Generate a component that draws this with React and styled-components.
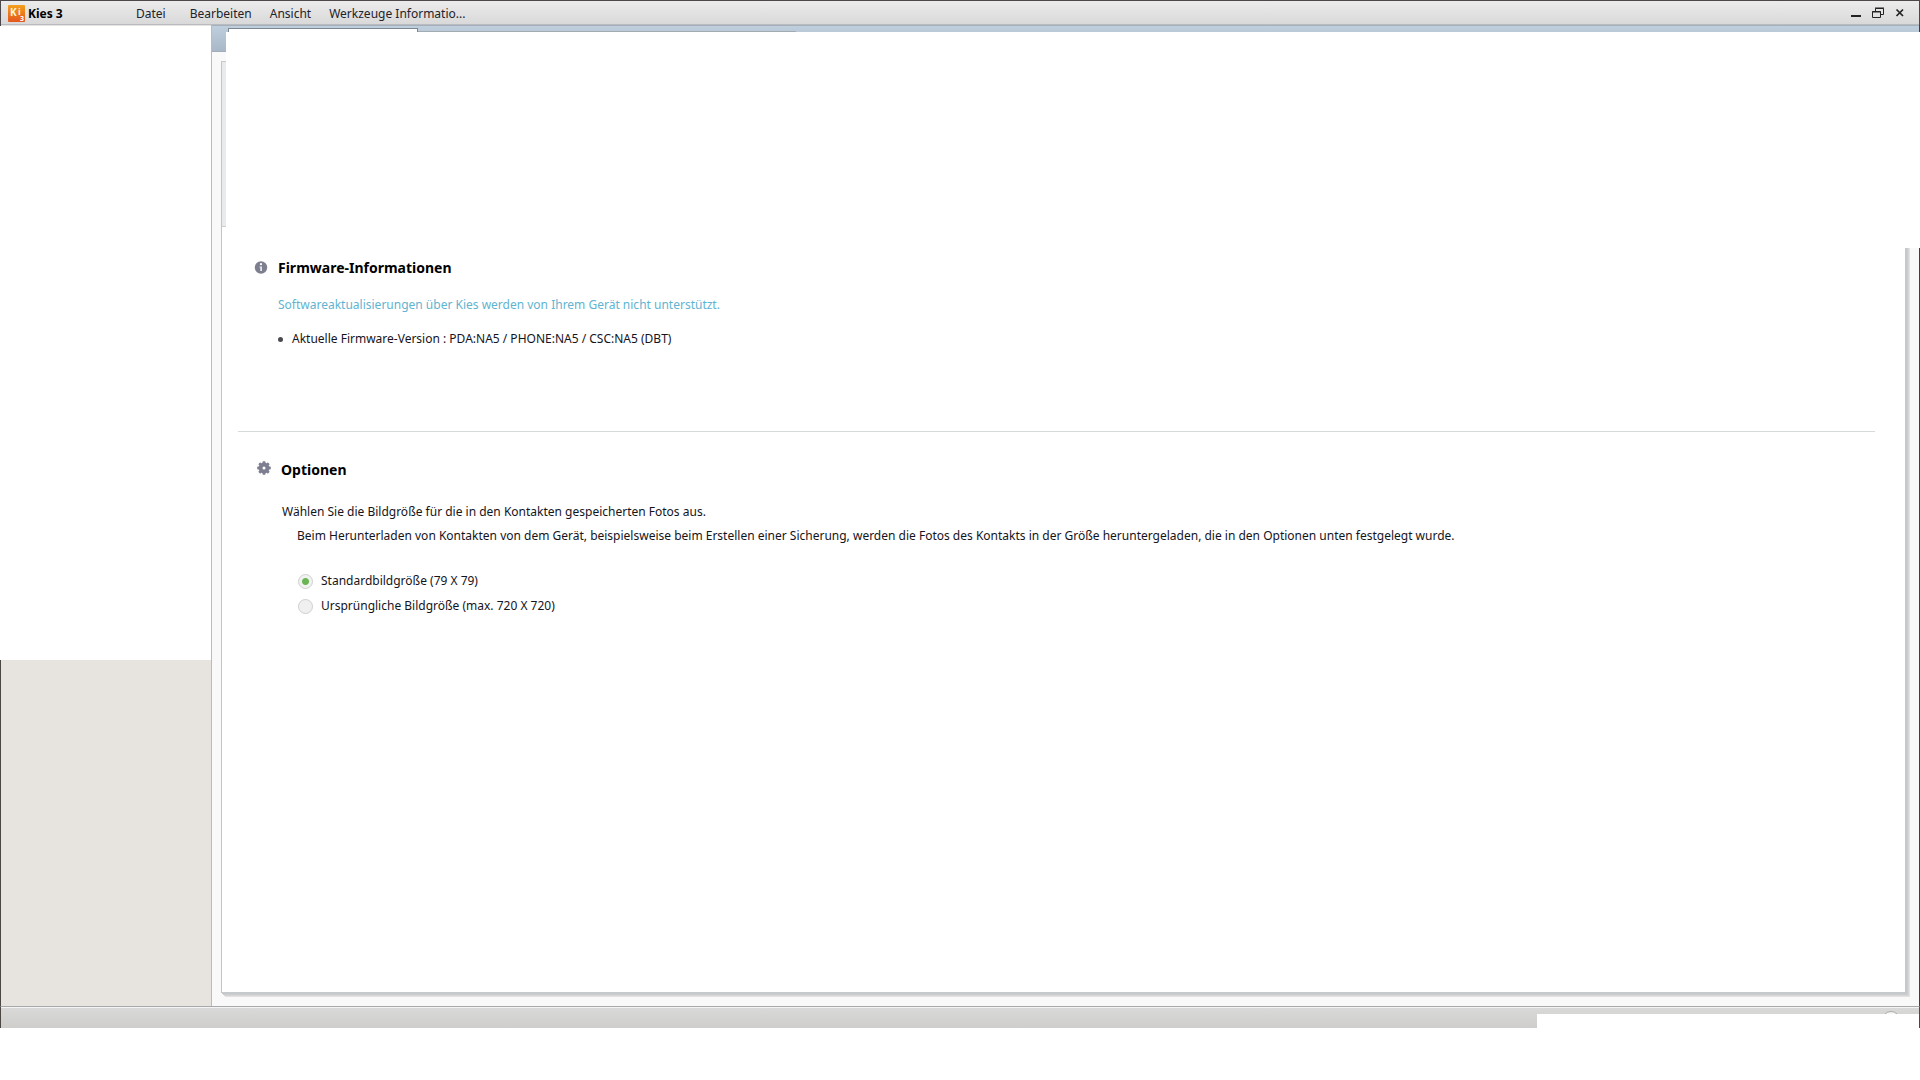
import React, { useState } from 'react';
import styled, { createGlobalStyle } from 'styled-components';

const GlobalStyle = createGlobalStyle`
  * {
    box-sizing: border-box;
  }
  body {
    margin: 0;
    background: #fff;
    color: #14141c;
    font-family: 'Noto Sans', 'Open Sans', sans-serif;
    font-size: 12px;
    line-height: 16px;
  }
`;

const Window = styled.div`
  position: relative;
  display: flex;
  flex-direction: column;
  min-height: calc(100vh - 52px);
  border-top: 1px solid #4b474b;
`;

const TitleBar = styled.header`
  display: flex;
  align-items: center;
  height: 24px;
  padding: 1px 10px 0 7px;
  background: linear-gradient(#ececec, #d8d8d8);
  border: solid #4b474b;
  border-width: 0 1px;
  box-shadow: inset 0 -1px #b8bcc0;
`;

const Brand = styled.div`
  display: flex;
  align-items: center;
  gap: 3px;
  width: 128px;
  font-weight: 700;
  color: #000;
`;

const Menu = styled.nav`
  display: flex;
  flex: 1;
  gap: 18px;
`;

const MenuItem = styled.button`
  padding: 0;
  border: none;
  background: none;
  font: inherit;
  color: #22222a;
  cursor: pointer;

  &:first-child {
    margin-right: 6px;
  }
`;

const WindowButtons = styled.div`
  display: flex;
  gap: 3px;
`;

const WindowButton = styled.button`
  display: flex;
  align-items: center;
  justify-content: center;
  width: 19px;
  height: 22px;
  padding: 0 0 2px;
  border: none;
  background: none;
  cursor: pointer;
`;

const Body = styled.div`
  display: flex;
  flex: 1;
`;

const Sidebar = styled.aside`
  position: relative;
  width: 212px;
  background: #e7e4df;
  border-left: 1px solid #4b4743;
  border-right: 1px solid #b9bcbe;
`;

const SidebarBlank = styled.div`
  position: absolute;
  top: 1px;
  left: -1px;
  right: 0;
  height: 634px;
  background: #fff;
`;

const Main = styled.main`
  position: relative;
  display: flex;
  flex-direction: column;
  flex: 1;
  background: #f9f9fa;
  border-right: 1px solid #3f3f42;
`;

const TabStrip = styled.div`
  display: flex;
  height: 27px;
  padding: 2px 0 0 16px;
  background: linear-gradient(#c0cfdd, #a9b8c8);
  border-top: 1px solid #a5b0bb;
  border-bottom: 1px solid #a3adb8;
`;

const ActiveTab = styled.div`
  width: 190px;
  background: #fff;
  border: 1px solid #7b8793;
  border-bottom: none;
`;

const TabLine = styled.div`
  width: 378px;
  height: 4px;
  border-bottom: 1px solid #a2aab2;
`;

const MainBlank = styled.div`
  position: absolute;
  top: 7px;
  left: 14px;
  right: -1px;
  height: 216px;
  background: #fff;
`;

const Panel = styled.div`
  flex: 1;
  margin: 9px 13px 13px 9px;
  background: #fff;
  border-left: 1px solid #c2c5c8;
  border-top: 1px solid #c8cbcd;
  border-right: 1px solid #c6c9cb;
  border-bottom: 1px solid #c6c9cb;
  box-shadow: 1px 1px #c6c9cc, 2px 2px #cbcdcf, 3px 3px #d6d6d6, 4px 4px #e4e1de;
`;

const PanelHead = styled.div`
  height: 165px;
  background: #e9eaeb;
  border-bottom: 1px solid #cdcfd1;
`;

const Section = styled.section`
  padding: 31px 0 0 32px;
`;

const FirmwareSection = styled(Section)`
  height: 204px;
`;

const OptionsSection = styled(Section)`
  padding: 28px 0 32px 35px;
`;

const Heading = styled.h2`
  display: flex;
  align-items: center;
  gap: 10px;
  margin: 0;
  font-size: 14px;
  line-height: 20px;
  font-weight: 700;
  color: #000;
`;

const FirmwareDetails = styled.div`
  padding-left: 24px;
`;

const OptionsDetails = styled.div`
  padding-left: 25px;
`;

const Notice = styled.p`
  margin: 19px 0 18px;
  color: #5fb4d0;
`;

const FactList = styled.ul`
  margin: 0;
  padding: 0;
  list-style: none;
`;

const Fact = styled.li`
  display: flex;
  align-items: center;
  gap: 9px;

  &::before {
    content: '';
    width: 5px;
    height: 5px;
    border-radius: 50%;
    background: #4a4a50;
  }
`;

const Divider = styled.hr`
  margin: 0 30px 0 16px;
  border: none;
  border-top: 1px solid #d6dad9;
`;

const Lead = styled.p`
  margin: 24px 0 8px;
`;

const Explanation = styled.p`
  margin: 0 0 29px 15px;
`;

const Choices = styled.fieldset`
  display: flex;
  flex-direction: column;
  align-items: flex-start;
  gap: 9px;
  margin: 0 0 0 16px;
  padding: 0;
  border: none;
`;

const Choice = styled.label`
  display: flex;
  align-items: center;
  gap: 8px;
  cursor: pointer;
`;

const Radio = styled.input`
  appearance: none;
  width: 15px;
  height: 15px;
  margin: 0;
  border: 1px solid #cdd0cd;
  border-radius: 50%;
  background: #f0f0f0;

  &:checked {
    background: radial-gradient(circle, #6cb555 0 3px, #f1f3f1 4px);
  }
`;

const StatusBar = styled.footer`
  position: relative;
  height: 22px;
  overflow: hidden;
  background: linear-gradient(#d9d9d9, #cfcecc);
  border: solid #4b4743;
  border-width: 1px 1px 0;
  border-top-color: #a7a8a9;
  box-shadow: inset 0 1px #f4f4f4;
`;

const StatusKnob = styled.div`
  position: absolute;
  top: 4px;
  right: 19px;
  width: 18px;
  height: 18px;
  border: 1px solid #aaa;
  border-radius: 50%;
  background: #f6f6f6;
`;

const StatusBlank = styled.div`
  position: absolute;
  top: 7px;
  right: -1px;
  bottom: 0;
  width: 383px;
  background: #fff;
`;

const menuItems = ['Datei', 'Bearbeiten', 'Ansicht', 'Werkzeuge Informatio...'];

const sizes = [
  { id: 'standard', label: 'Standardbildgröße (79 X 79)' },
  { id: 'original', label: 'Ursprüngliche Bildgröße (max. 720 X 720)' }
];

const teeth = [0, 45, 90, 135, 180, 225, 270, 315];

function Logo() {
  return (
    <svg width="17" height="17" viewBox="0 0 17 17" overflow="visible" fontFamily="Open Sans" fontWeight="700">
      <defs>
        <linearGradient id="logo" x1="0" y1="0" x2="0" y2="1">
          <stop offset="0" stopColor="#f3a01c" />
          <stop offset="1" stopColor="#e4561d" />
        </linearGradient>
      </defs>
      <rect width="17" height="17" rx="1" fill="url(#logo)" />
      <text x="2" y="11" fontSize="10" fill="#fff3dc">K</text>
      <text x="10" y="10" fontSize="9" fill="#fff3dc">i</text>
      <text x="12" y="16" fontSize="7" fill="#fff">3</text>
    </svg>
  );
}

function InfoIcon() {
  return (
    <svg width="14" height="14" viewBox="0 0 14 14">
      <circle cx="7" cy="6.5" r="6.2" fill="#7d7f90" />
      <circle cx="7" cy="3.2" r="1.1" fill="#fff" />
      <path d="M5.5 5.5H8V10H6.2V6.5H5.5Z" fill="#e6e6ec" />
    </svg>
  );
}

function GearIcon() {
  return (
    <svg width="14" height="14" viewBox="0 0 14 14" overflow="visible">
      <circle cx="7" cy="5" r="5.4" fill="#7d7f90" />
      {teeth.map((a) => (
        <rect key={a} x="5.5" y="-1.8" width="3" height="2.6" rx="0.8" fill="#7d7f90" transform={`rotate(${a} 7 5)`} />
      ))}
      <circle cx="7" cy="5" r="1.5" fill="#fff" />
    </svg>
  );
}

function App() {
  const [size, setSize] = useState('standard');

  return (
    <>
      <GlobalStyle />
      <Window>
        <TitleBar>
          <Brand>
            <Logo />
            Kies 3
          </Brand>
          <Menu>
            {menuItems.map((item) => (
              <MenuItem key={item}>{item}</MenuItem>
            ))}
          </Menu>
          <WindowButtons>
            <WindowButton aria-label="Minimieren">
              <svg width="12" height="12" viewBox="0 0 12 12">
                <path d="M1 9H11" stroke="#222" strokeWidth="2" />
              </svg>
            </WindowButton>
            <WindowButton aria-label="Wiederherstellen">
              <svg width="12" height="12" viewBox="0 0 12 12" fill="none" stroke="#222">
                <path d="M3.5 4V1.5H11.5V7.5H9M3 1H12" />
                <path d="M0.5 4.5H8.5V10.5H0.5ZM0 5H9" />
              </svg>
            </WindowButton>
            <WindowButton aria-label="Schließen">
              <svg width="12" height="12" viewBox="0 0 12 12">
                <path d="M2.5 2.5L9 9M9 2.5L2.5 9" stroke="#222" strokeWidth="1.7" />
              </svg>
            </WindowButton>
          </WindowButtons>
        </TitleBar>

        <Body>
          <Sidebar>
            <SidebarBlank />
          </Sidebar>
          <Main>
            <TabStrip>
              <ActiveTab />
              <TabLine />
            </TabStrip>
            <Panel>
              <PanelHead />
              <FirmwareSection>
                <Heading>
                  <InfoIcon />
                  Firmware-Informationen
                </Heading>
                <FirmwareDetails>
                  <Notice>Softwareaktualisierungen über Kies werden von Ihrem Gerät nicht unterstützt.</Notice>
                  <FactList>
                    <Fact>Aktuelle Firmware-Version : PDA:NA5 / PHONE:NA5 / CSC:NA5 (DBT)</Fact>
                  </FactList>
                </FirmwareDetails>
              </FirmwareSection>
              <Divider />
              <OptionsSection>
                <Heading>
                  <GearIcon />
                  Optionen
                </Heading>
                <OptionsDetails>
                  <Lead>Wählen Sie die Bildgröße für die in den Kontakten gespeicherten Fotos aus.</Lead>
                  <Explanation>
                    Beim Herunterladen von Kontakten von dem Gerät, beispielsweise beim Erstellen einer Sicherung, werden die Fotos des Kontakts in der Größe heruntergeladen, die in den Optionen unten festgelegt wurde.
                  </Explanation>
                  <Choices>
                    {sizes.map((s) => (
                      <Choice key={s.id}>
                        <Radio
                          type="radio"
                          name="size"
                          value={s.id}
                          checked={size === s.id}
                          onChange={() => setSize(s.id)}
                        />
                        {s.label}
                      </Choice>
                    ))}
                  </Choices>
                </OptionsDetails>
              </OptionsSection>
            </Panel>
            <MainBlank />
          </Main>
        </Body>

        <StatusBar>
          <StatusKnob />
          <StatusBlank />
        </StatusBar>
      </Window>
    </>
  );
}

export default App;
